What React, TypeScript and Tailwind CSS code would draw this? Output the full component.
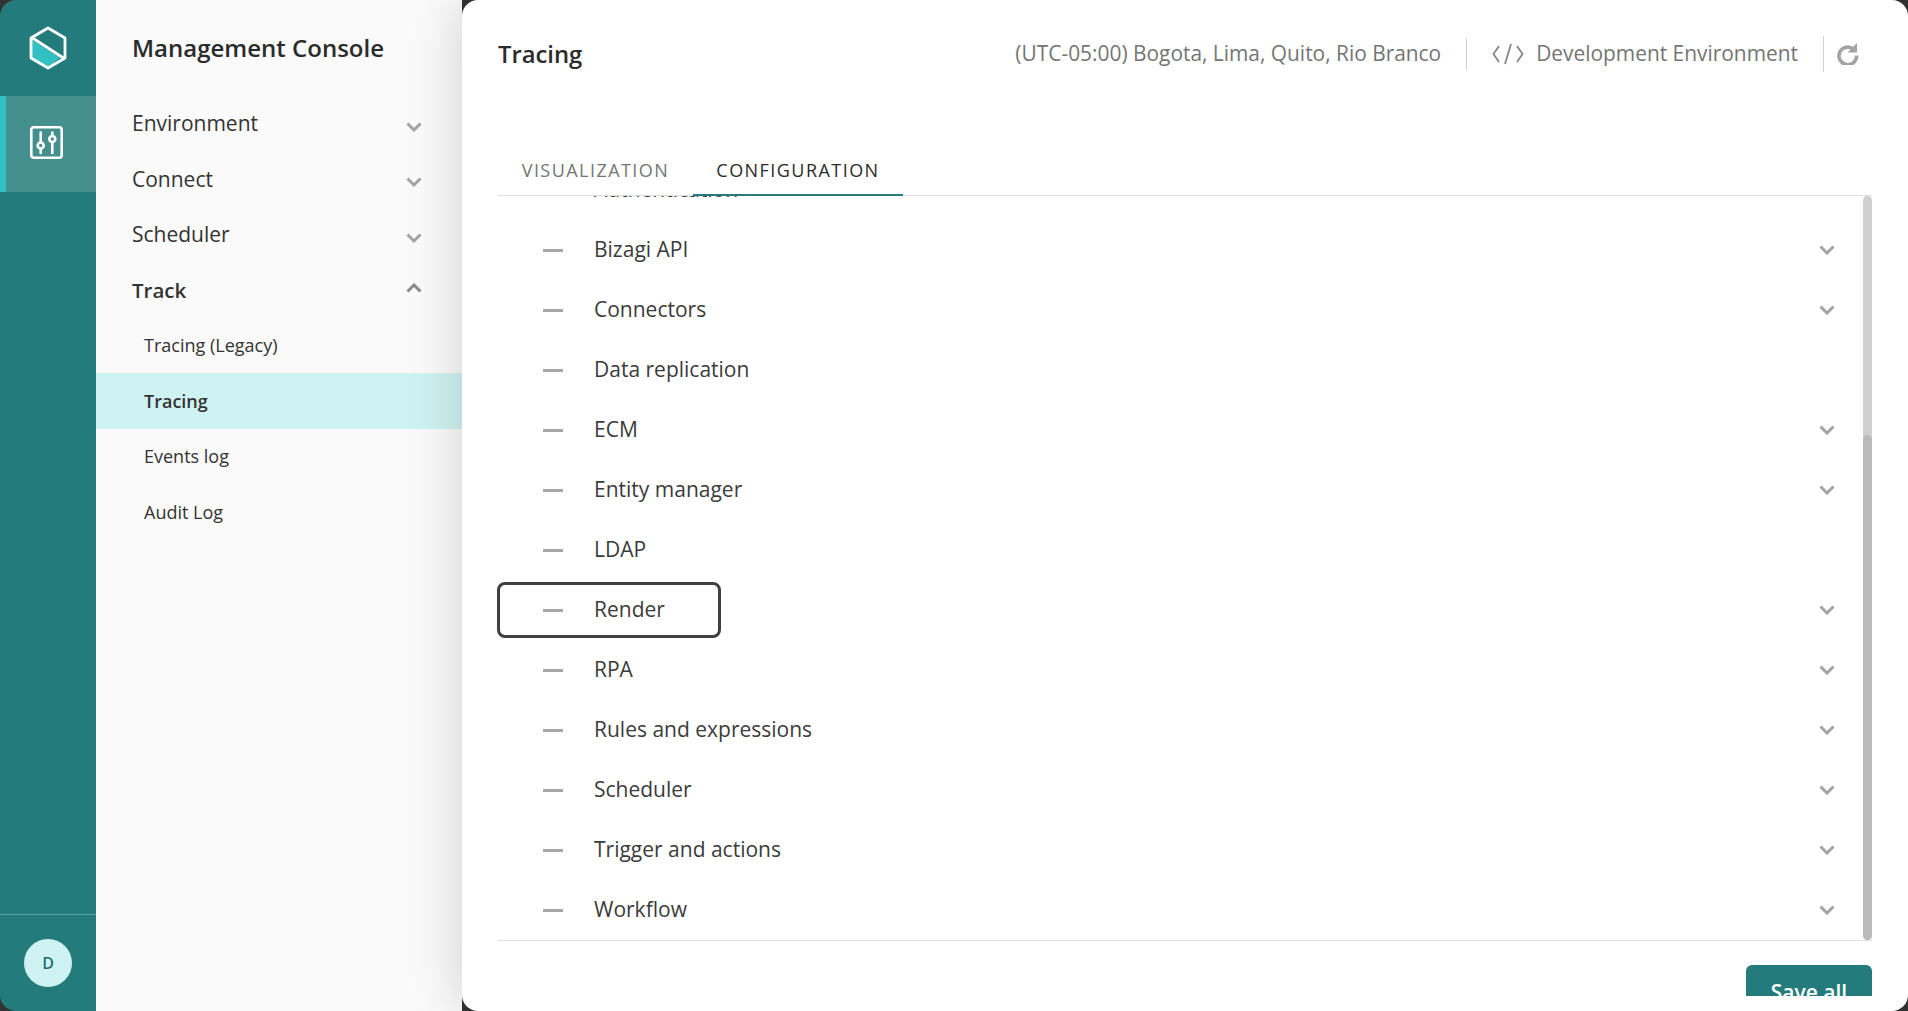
// Management console - tracing configuration view
const sections = [
    { label: "Environment" },
    { label: "Connect" },
    { label: "Scheduler" },
]

const subItems = ["Tracing (Legacy)", "Tracing", "Events log", "Audit Log"]

const rows = [
    { label: "Authentication", expandable: true },
    { label: "Bizagi API", expandable: true },
    { label: "Connectors", expandable: true },
    { label: "Data replication", expandable: false },
    { label: "ECM", expandable: true },
    { label: "Entity manager", expandable: true },
    { label: "LDAP", expandable: false },
    { label: "Render", expandable: true, focused: true },
    { label: "RPA", expandable: true },
    { label: "Rules and expressions", expandable: true },
    { label: "Scheduler", expandable: true },
    { label: "Trigger and actions", expandable: true },
    { label: "Workflow", expandable: true },
]

function Chevron({ up = false }: { up?: boolean }) {
    return (
        <svg width="16" height="10" viewBox="0 0 16 10" fill="none" className={up ? "rotate-180" : ""}>
            <path d="M1.5 1.5 8 8l6.5-6.5" stroke={up ? "#8a8a8a" : "#a3a3a3"} strokeWidth="3" />
        </svg>
    )
}

function Logo() {
    return (
        <svg width="38" height="44" viewBox="0 0 38 44" fill="none">
            <path d="M2 13 L31 32 L19 41 L2 31 Z" fill="#33c0c2" />
            <path d="M19 2 L36 12 L36 32 L19 42 L2 32 L2 12 Z" stroke="#fff" strokeWidth="2.8" strokeLinejoin="round" />
            <path d="M2 11 L36 33" stroke="#fff" strokeWidth="2.8" />
        </svg>
    )
}

function SlidersIcon() {
    return (
        <svg width="33" height="33" viewBox="0 0 33 33" fill="none" stroke="#fff" strokeWidth="2.6">
            <rect x="1.3" y="1.3" width="30.400" height="30.400" rx="2.5" />
            <path d="M10.700 6.500v9.500M10.700 23v4M22.300 6.500v3M22.300 16.500v10.500" strokeLinecap="round" />
            <circle cx="10.700" cy="19.500" r="3" />
            <circle cx="22.300" cy="13" r="3" />
        </svg>
    )
}

function RefreshIcon() {
    return (
        <svg width="23" height="22" viewBox="0 0 23 22" fill="none">
            <path d="M16.500 6.200A8.800 8.800 0 1 0 19.600 12.500" stroke="#a3a3a3" strokeWidth="3.600" />
            <path d="M20 0v9.500h-9.500z" fill="#a3a3a3" />
        </svg>
    )
}

function CodeIcon() {
    return (
        <svg width="32" height="22" viewBox="0 0 32 22" fill="none" stroke="#858585" strokeWidth="1.8">
            <path d="M7 3 1.500 11 7 19M25 3l5.500 8-5.500 8M19 1 13 21" />
        </svg>
    )
}

export default function App() {
    return (
        <div
            className="flex h-screen w-full overflow-hidden bg-[#333333] text-[#333333]"
            style={{ fontFamily: '"Open Sans", sans-serif' }}
        >
            {/* Icon rail */}
            <div className="flex w-[96px] shrink-0 flex-col rounded-l-2xl bg-[#237b7b]">
                <div className="flex h-[96px] items-center justify-center">
                    <Logo />
                </div>
                <div className="flex h-[96px] items-center justify-center border-l-[6px] border-[#33c0c2] bg-[#468f8f] pb-[3px] pr-[9px]">
                    <SlidersIcon />
                </div>
                <div className="mt-auto flex h-[97px] items-center justify-center border-t border-[#5c9f9f]">
                    <div className="flex h-12 w-12 items-center justify-center rounded-full bg-[#cff3f3] text-base font-semibold text-[#1f6f6f]">
                        D
                    </div>
                </div>
            </div>

            {/* Section menu */}
            <div className="w-[366px] shrink-0 bg-[#fafafa]">
                <div className="pl-[36px] pt-[29px] text-[24px] leading-[37px] font-semibold text-[#2b2b2b]">
                    Management Console
                </div>
                <div className="mt-[30px]">
                    {sections.map((section) => (
                        <div key={section.label} className="flex h-[55.6px] items-center justify-between pl-[36px] pr-[40px] text-[21px]">
                            <span>{section.label}</span>
                            <span className="mt-[6px]"><Chevron /></span>
                        </div>
                    ))}
                    <div className="flex h-[55.6px] items-center justify-between pl-[36px] pr-[40px] text-[20.5px] font-semibold">
                        <span>Track</span>
                        <span className="-mt-[6px]"><Chevron up /></span>
                    </div>
                </div>
                <div className="-mt-[0.5px]">
                    {subItems.map((item) => (
                        <div
                            key={item}
                            className={
                                item === "Tracing"
                                    ? "flex h-[55.5px] items-center bg-[#cff3f2] pl-[48px] text-[18px] font-semibold"
                                    : "flex h-[55.5px] items-center pl-[48px] text-[18px]"
                            }
                        >
                            {item}
                        </div>
                    ))}
                </div>
            </div>

            {/* Main panel */}
            <div className="relative z-10 flex min-w-0 flex-1 flex-col rounded-2xl bg-white pb-[15px] pl-[36px] pr-[36px] shadow-[-4px_0_50px_rgba(0,0,0,0.15)]">
                <div className="flex h-[108px] shrink-0 items-center justify-between">
                    <h1 className="pt-[2px] text-[23.8px] font-semibold text-[#2b2b2b]">Tracing</h1>
                    <div className="flex items-center text-[20.9px] text-[#757575]">
                        <span>(UTC-05:00) Bogota, Lima, Quito, Rio Branco</span>
                        <span className="mx-[25px] h-[32px] w-px bg-[#cfcfcf]" />
                        <CodeIcon />
                        <span className="ml-[12px]">Development Environment</span>
                        <span className="ml-[25px] mr-[13px] h-[36px] w-px bg-[#cfcfcf]" />
                        <RefreshIcon />
                        <span className="w-[12px]" />
                    </div>
                </div>

                {/* Tabs */}
                <div className="flex h-[88px] shrink-0 items-end border-b border-[#dedede]">
                    <div className="flex h-[49px] w-[195px] items-center justify-center text-[18px] tracking-[1.45px] text-[#757575]">
                        VISUALIZATION
                    </div>
                    <div className="-mb-px flex h-[50px] w-[210px] items-center justify-center border-b-2 border-[#237b7b] text-[18px] tracking-[1.45px] text-[#2b2b2b]">
                        CONFIGURATION
                    </div>
                </div>

                {/* Settings list, scrolled part way down */}
                <div className="relative h-[745px] shrink-0 overflow-x-visible overflow-y-clip border-b border-[#dedede]">
                    <div className="-mt-[36px]">
                        {rows.map((row) => (
                            <div key={row.label} className="relative flex h-[60px] items-center pr-[37px] text-[21px] text-[#3b3b3b]">
                                <span className="ml-[45px] h-[3px] w-[20px] bg-[#a6a6a6]" />
                                <span className="ml-[31px] flex-1">{row.label}</span>
                                {row.expandable && <Chevron />}
                                {row.focused && (
                                    <span className="absolute -left-px top-[2px] h-[56px] w-[224px] rounded-lg border-[3px] border-[#404040]" />
                                )}
                            </div>
                        ))}
                    </div>
                    <div className="absolute bottom-0 right-0 top-0 w-[9px] rounded-full bg-[#cfcfcf]">
                        <div className="absolute bottom-0 left-0 right-0 top-[239px] rounded-full bg-[#bababa]" />
                    </div>
                </div>

                {/* Footer, cut off at the bottom of the panel */}
                <div className="flex min-h-0 flex-1 justify-end overflow-hidden pt-[24px]">
                    <div className="flex h-[55px] w-[126px] shrink-0 items-center justify-center rounded-md bg-[#237b7b] text-[21px] font-semibold text-white">
                        Save all
                    </div>
                </div>
            </div>
        </div>
    )
}
